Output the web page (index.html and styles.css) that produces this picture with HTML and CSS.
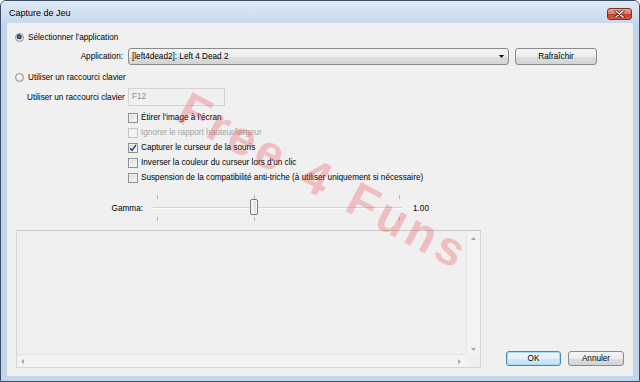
FILE: index.html
```html
<!DOCTYPE html>
<html lang="fr">
    <head>
        <meta charset="UTF-8" />
        <meta name="viewport" content="width=device-width, initial-scale=1.0" />
        <title>Capture de Jeu</title>
        <link rel="stylesheet" href="styles.css">
    </head>
    <body>
        <div class="window">
            <div class="titlebar">
                <span class="title">Capture de Jeu</span>
                <button class="close-btn" aria-label="Fermer">
                    <svg width="11" height="8" viewBox="0 0 11 8">
                        <path d="M2 1 9 7M9 1 2 7" stroke="#4a1a14" stroke-width="3" stroke-linecap="round"></path>
                        <path d="M2 1 9 7M9 1 2 7" stroke="#ffffff" stroke-width="1.6" stroke-linecap="round"></path>
                    </svg>
                </button>
            </div>

            <div class="client">
                <label class="radio-row first">
                    <span class="radio checked"></span>Sélectionner l'application
                </label>

                <div class="app-row">
                    <span class="field-label">Application:</span>
                    <div class="combo">
                        <span>[left4dead2]: Left 4 Dead 2</span>
                        <svg width="5" height="3" viewBox="0 0 5 3"><path d="M0 0h5L2.5 3z" fill="#000"></path></svg>
                    </div>
                    <button class="btn refresh">Rafraîchir</button>
                </div>

                <label class="radio-row second">
                    <span class="radio"></span>Utiliser un raccourci clavier
                </label>

                <div class="hotkey-row">
                    <span>Utiliser un raccourci clavier</span>
                    <div class="hotkey-input">F12</div>
                </div>

                <!-- Options -->
                <div class="options">
                    <label class="check-row"><span class="check"></span>Étirer l'image à l'écran</label>
                    <label class="check-row disabled"><span class="check"></span>Ignorer le rapport hauteur/largeur</label>
                    <label class="check-row">
                        <span class="check">
                            <svg width="8" height="8" viewBox="0 0 8 8"><path d="M1 4.2 3 6.5 7 1" fill="none" stroke="#2c3f78" stroke-width="1.4"></path></svg>
                        </span>Capturer le curseur de la souris
                    </label>
                    <label class="check-row"><span class="check"></span>Inverser la couleur du curseur lors d'un clic</label>
                    <label class="check-row"><span class="check"></span>Suspension de la compatibilité anti-triche (à utiliser uniquement si nécessaire)</label>
                </div>

                <!-- Gamma -->
                <div class="gamma-row">
                    <span class="field-label">Gamma:</span>
                    <div class="slider">
                        <div class="track"></div>
                        <span class="tick top start"></span>
                        <span class="tick bottom start"></span>
                        <span class="tick top mid"></span>
                        <span class="tick bottom mid"></span>
                        <span class="tick top end"></span>
                        <span class="tick bottom end"></span>
                        <div class="thumb"></div>
                    </div>
                    <span class="gamma-value">1.00</span>
                </div>

                <div class="bottom-row">
                    <div class="preview">
                        <div class="preview-area"></div>
                        <div class="vbar">
                            <svg width="5" height="3" viewBox="0 0 5 3"><path d="M0 3h5L2.5 0z" fill="#a8a8a8"></path></svg>
                            <svg width="5" height="3" viewBox="0 0 5 3"><path d="M0 0h5L2.5 3z" fill="#a8a8a8"></path></svg>
                        </div>
                        <div class="hbar">
                            <svg width="3" height="5" viewBox="0 0 3 5"><path d="M3 0v5L0 2.5z" fill="#a8a8a8"></path></svg>
                            <svg width="3" height="5" viewBox="0 0 3 5"><path d="M0 0v5L3 2.5z" fill="#a8a8a8"></path></svg>
                        </div>
                        <div class="corner"></div>
                    </div>
                    <div class="actions">
                        <button class="btn default">OK</button>
                        <button class="btn cancel">Annuler</button>
                    </div>
                </div>
            </div>

            <div class="watermark">Free 4 Funs</div>
        </div>
    </body>
</html>
```

FILE: styles.css
```css
* {
    margin: 0;
    padding: 0;
    box-sizing: border-box;
    font-family: "Liberation Sans", Arial, sans-serif;
}

body {
    width: 640px;
    height: 382px;
    overflow: hidden;
    background-color: #ffffff;
}

.window {
    position: relative;
    width: 640px;
    height: 382px;
    display: flex;
    flex-direction: column;
    background-color: #c1d5eb;
    border: 1px solid #394e66;
    border-radius: 6px 6px 0 0;
    overflow: hidden;
}

/* Title bar */
.titlebar {
    height: 22px;
    flex-shrink: 0;
    display: flex;
    justify-content: space-between;
    align-items: flex-start;
    padding: 0 7px 0 8px;
    background: linear-gradient(#dfe9f6, #c8d9ee);
}

.title {
    font-size: 9px;
    line-height: 24px;
    color: #000000;
}

.close-btn {
    margin-top: 7px;
    width: 25px;
    height: 12px;
    border: 1px solid #7a3226;
    border-radius: 3px;
    background: linear-gradient(#eba596 0%, #dc7a66 45%, #c8402a 55%, #d65a40 100%);
    display: flex;
    align-items: center;
    justify-content: center;
}

/* Client area */
.client {
    flex: 1;
    margin: 0 6px 5px;
    background-color: #f0f0f0;
    display: flex;
    flex-direction: column;
    font-size: 8.2px;
    color: #000000;
}

.field-label {
    text-align: right;
}

.radio-row {
    display: flex;
    align-items: center;
    gap: 4px;
    height: 11px;
    padding-left: 8px;
}

.radio-row.first {
    margin-top: 9px;
}

.radio-row.second {
    margin-top: 7px;
}

.radio {
    width: 9px;
    height: 9px;
    flex-shrink: 0;
    border-radius: 50%;
    border: 1px solid #8b8d8f;
    background: radial-gradient(circle at 40% 35%, #ffffff, #d4d4d4);
}

.radio.checked {
    background:
        radial-gradient(circle at 45% 40%, #6f95c4 0, #24467a 1.6px, #1b3561 2.2px, transparent 2.8px),
        radial-gradient(circle at 40% 35%, #ffffff, #d4d4d4);
}

.app-row {
    margin-top: 5px;
    height: 17px;
    display: grid;
    grid-template-columns: 116px 381px 83px;
    column-gap: 5px;
    align-items: center;
}

.combo {
    height: 17px;
    display: flex;
    align-items: center;
    justify-content: space-between;
    padding: 0 4px 0 3px;
    border: 1px solid #8a8a8a;
    border-radius: 3px;
    background: linear-gradient(#f4f4f4 0%, #ececec 50%, #dfdfdf 51%, #d3d3d3 100%);
}

.btn {
    height: 17px;
    font-family: inherit;
    font-size: 8.2px;
    color: #000000;
    border: 1px solid #8a8a8a;
    border-radius: 3px;
    background: linear-gradient(#f4f4f4 0%, #ececec 50%, #dfdfdf 51%, #d3d3d3 100%);
}

.btn.refresh {
    margin-left: 1px;
}

.btn.default {
    width: 55px;
    height: 15px;
    border-color: #3d8cc4;
    background: linear-gradient(#eef7fd 0%, #e2f1fb 50%, #d1e9f7 51%, #c3e1f4 100%);
    box-shadow: inset 0 0 0 1px #a6dcf6;
}

.btn.cancel {
    width: 56px;
    height: 15px;
}

.hotkey-row {
    margin-top: 5px;
    height: 18px;
    display: grid;
    grid-template-columns: 101px 97px;
    align-items: center;
    padding-left: 20px;
}

.hotkey-input {
    height: 18px;
    line-height: 16px;
    padding-left: 3px;
    border: 1px solid #d4d4d4;
    color: #8d8d8d;
    background-color: #f0f0f0;
}

/* Options */
.options {
    margin-top: 4px;
    display: flex;
    flex-direction: column;
    padding-left: 121px;
}

.check-row {
    display: flex;
    align-items: center;
    gap: 3px;
    height: 15px;
}

.check {
    width: 10px;
    height: 10px;
    flex-shrink: 0;
    display: flex;
    align-items: center;
    justify-content: center;
    border: 1px solid #8e8f8f;
    background: linear-gradient(135deg, #d6d6d6, #fbfbfb);
    box-shadow: inset 0 0 0 1px #f2f2f2;
}

.check-row.disabled {
    color: #a3a3a3;
}

.check-row.disabled .check {
    border-color: #c6c6c6;
    background: #f4f4f4;
}

/* Gamma slider */
.gamma-row {
    margin-top: 10px;
    height: 26px;
    display: grid;
    grid-template-columns: 136px 249px auto;
    column-gap: 10px;
    align-items: center;
}

.slider {
    position: relative;
    height: 26px;
}

.track {
    position: absolute;
    left: 0;
    right: 0;
    top: 12px;
    height: 2px;
    background-color: #d4d4d4;
    border-bottom: 1px solid #fbfbfb;
}

.tick {
    position: absolute;
    width: 1px;
    height: 4px;
    background-color: #b5b5b5;
}

.tick.top {
    top: 0;
}

.tick.bottom {
    top: 22px;
}

.tick.start {
    left: 4px;
}

.tick.mid {
    left: 101px;
}

.tick.end {
    left: 246px;
}

.thumb {
    position: absolute;
    left: 97px;
    top: 4px;
    width: 8px;
    height: 16px;
    border: 1px solid #777777;
    border-radius: 2px;
    background: linear-gradient(90deg, #f6f6f6, #dcdcdc);
    box-shadow: inset 0 0 0 1px #fafafa;
}

.gamma-value {
    margin-left: 1px;
}

/* Preview and buttons */
.bottom-row {
    margin-top: 9px;
    display: flex;
    align-items: flex-end;
    padding-left: 9px;
}

.preview {
    width: 465px;
    height: 138px;
    display: grid;
    grid-template-columns: 1fr 14px;
    grid-template-rows: 1fr 13px;
    border: 1px solid #d6d6d6;
    border-top-color: #c6c6c6;
    background-color: #f0f0f0;
}

.vbar {
    display: flex;
    flex-direction: column;
    justify-content: space-between;
    align-items: center;
    padding: 6px 0 3px;
    border-left: 1px solid #e4e4e4;
    background-color: #f3f3f3;
}

.hbar {
    display: flex;
    justify-content: space-between;
    align-items: center;
    padding: 0 5px 0 4px;
    border-top: 1px solid #e4e4e4;
    background-color: #f3f3f3;
}

.corner {
    background-color: #f0f0f0;
}

.actions {
    display: flex;
    gap: 7px;
    margin-left: 25px;
    margin-bottom: 2px;
}

/* Watermark */
.watermark {
    position: absolute;
    left: 323px;
    top: 180px;
    transform: translate(-50%, -50%) rotate(28deg);
    font-size: 48px;
    font-weight: 700;
    letter-spacing: 4px;
    word-spacing: 4px;
    white-space: nowrap;
    color: rgba(236, 60, 70, 0.28);
    pointer-events: none;
}
```
